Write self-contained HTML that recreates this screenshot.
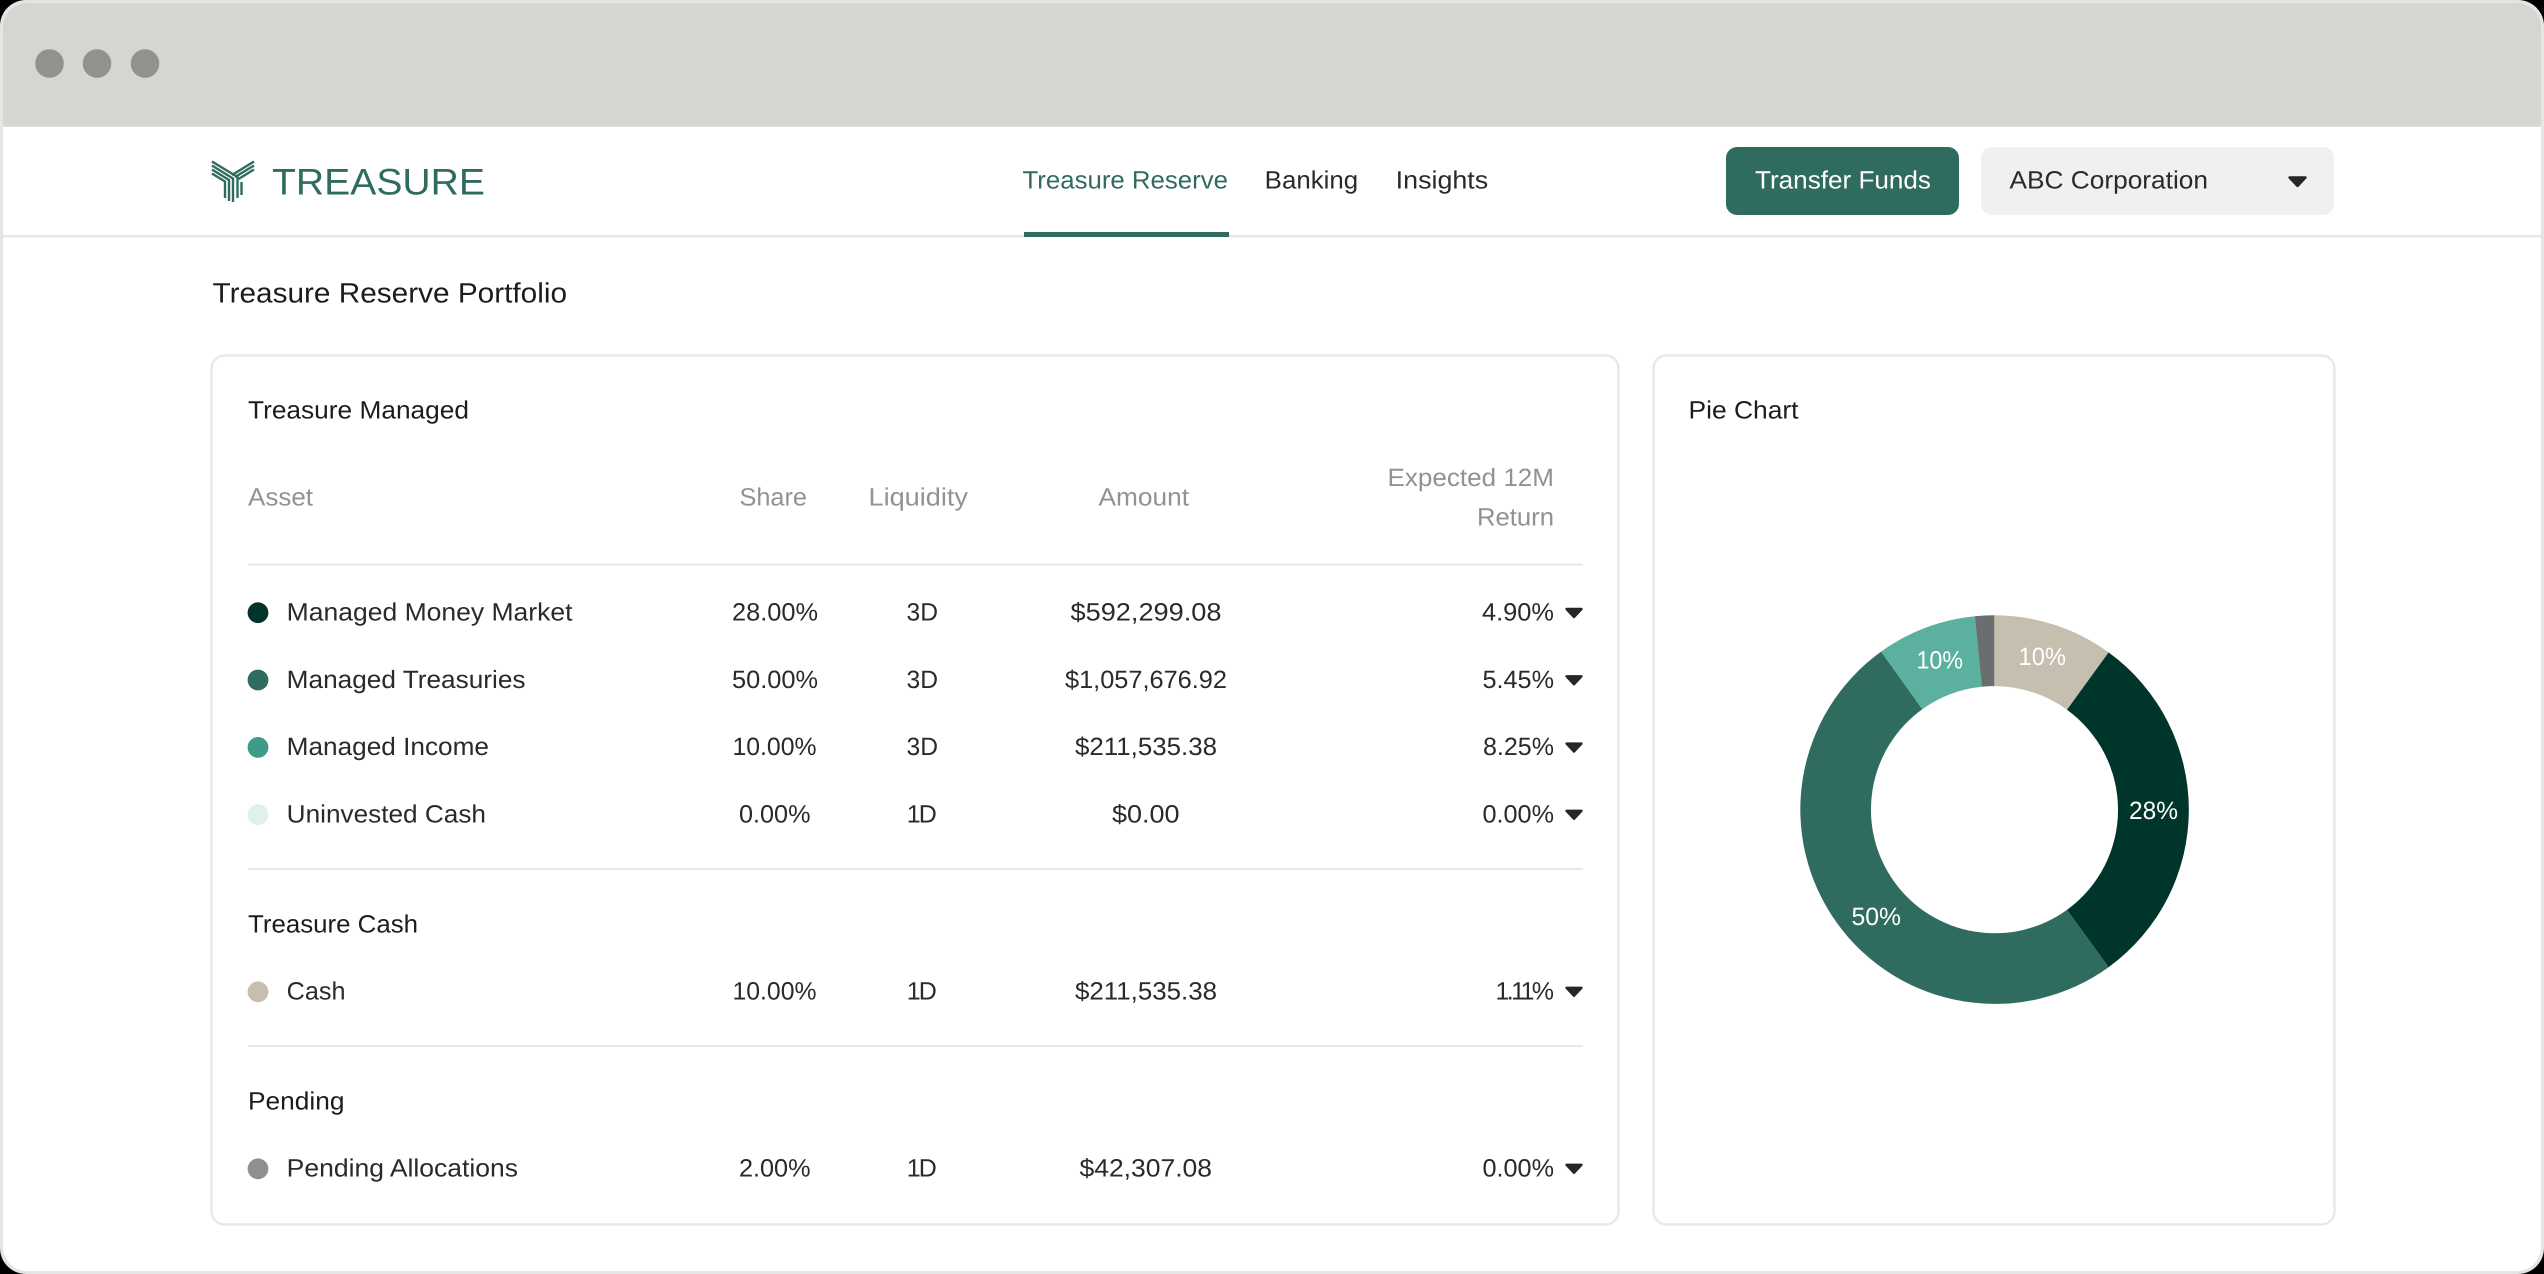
<!DOCTYPE html>
<html lang="en">
<head>
<meta charset="utf-8">
<title>Treasure Reserve Portfolio</title>
<style>
html,body{margin:0;padding:0;width:2544px;height:1274px;overflow:hidden;background:#000}
svg{display:block}
text{font-family:"Liberation Sans",sans-serif;font-size:25px;fill:#2a2a2a;text-rendering:geometricPrecision}
.g{fill:#929292}
.t{fill:#1c1c1c}
.w{fill:#fff}
.n{font-size:25px}
</style>
</head>
<body>
<svg xmlns="http://www.w3.org/2000/svg" width="2544" height="1274" viewBox="0 0 2544 1274">
  <!-- window frame -->
  <rect x="0" y="0" width="2544" height="1274" fill="#000"/>
  <rect x="0" y="0" width="2544" height="1274" rx="26" fill="#e5e5e5"/>
  <path d="M3 127V27A24 24 0 0 1 27 3H2517A24 24 0 0 1 2541 27V127Z" fill="#d6d5d1"/>
  <rect x="3" y="125" width="2538" height="2" fill="#dcdbd8"/>
  <path d="M3 127H2541V1247A24 24 0 0 1 2517 1271H27A24 24 0 0 1 3 1247Z" fill="#fff"/>
  <circle cx="49.5" cy="63.5" r="14.3" fill="#92918e"/>
  <circle cx="97" cy="63.5" r="14.3" fill="#92918e"/>
  <circle cx="145" cy="63.5" r="14.3" fill="#92918e"/>

  <!-- nav -->
  <rect x="3" y="235" width="2538" height="2.4" fill="#e5e5e5"/>
  <rect x="1024" y="232" width="205" height="5" fill="#306b5f"/>

  <!-- logo mark -->
  <g fill="none" stroke="#306b5f" stroke-width="2.4">
    <path d="M212 161.5L237.5 177V198"/>
    <path d="M212 165.5L233 178.5V202"/>
    <path d="M212 169.5L229 180V201"/>
    <path d="M212 173.5L225 181.5V198"/>
    <path d="M254 161.5L232 175"/>
    <path d="M254 165.5L235 177"/>
    <path d="M254 169.5L238.5 179"/>
    <path d="M241.5 182V195"/>
  </g>
  <text x="272" y="194.5" textLength="213" lengthAdjust="spacingAndGlyphs" style="font-size:37px;fill:#306b5f">TREASURE</text>

  <text class="n" x="1022.5" y="188.7" textLength="205.5" lengthAdjust="spacingAndGlyphs" style="fill:#306b5f">Treasure Reserve</text>
  <text class="n" x="1264.7" y="188.7" textLength="93.5" lengthAdjust="spacingAndGlyphs">Banking</text>
  <text class="n" x="1395.7" y="188.7" textLength="92.5" lengthAdjust="spacingAndGlyphs">Insights</text>

  <rect x="1726" y="147" width="233" height="68" rx="11" fill="#306b5f"/>
  <text class="n w" x="1755" y="188.7" textLength="176" lengthAdjust="spacingAndGlyphs">Transfer Funds</text>
  <rect x="1981" y="147" width="353" height="68" rx="11" fill="#f0f0f0"/>
  <text class="n" x="2009.5" y="188.7" textLength="198.5" lengthAdjust="spacingAndGlyphs">ABC Corporation</text>
  <path d="M2289.5 177.5H2305.5L2297.5 186Z" fill="#262626" stroke="#262626" stroke-width="2.4" stroke-linejoin="round"/>

  <!-- title -->
  <text x="212.5" y="302.5" textLength="354.5" lengthAdjust="spacingAndGlyphs" class="t" style="font-size:28px">Treasure Reserve Portfolio</text>

  <!-- cards -->
  <rect x="211.5" y="355.5" width="1407" height="869" rx="13" fill="#fff" stroke="#e8e8e8" stroke-width="2.4"/>
  <rect x="1653.5" y="355.5" width="681" height="869" rx="13" fill="#fff" stroke="#e8e8e8" stroke-width="2.4"/>

  <!-- left card -->
  <text class="t" x="248" y="418.4" textLength="221" lengthAdjust="spacingAndGlyphs">Treasure Managed</text>

  <text class="g" x="248" y="505.5" textLength="65" lengthAdjust="spacingAndGlyphs">Asset</text>
  <text class="g" x="739.5" y="505.5" textLength="67.5" lengthAdjust="spacingAndGlyphs">Share</text>
  <text class="g" x="868.5" y="505.5" textLength="99.5" lengthAdjust="spacingAndGlyphs">Liquidity</text>
  <text class="g" x="1098.5" y="505.5" textLength="90.5" lengthAdjust="spacingAndGlyphs">Amount</text>
  <text class="g" x="1387.5" y="486" textLength="166.5" lengthAdjust="spacingAndGlyphs">Expected 12M</text>
  <text class="g" x="1477" y="525.3" textLength="77" lengthAdjust="spacingAndGlyphs">Return</text>

  <rect x="248" y="563.5" width="1335" height="2" fill="#e8e8e8"/>

  <!-- rows -->
  <circle cx="258" cy="612.7" r="10.4" fill="#03342b"/>
  <text x="286.7" y="620.5" textLength="285.8" lengthAdjust="spacingAndGlyphs">Managed Money Market</text>
  <text x="732" y="620.5" textLength="86" lengthAdjust="spacingAndGlyphs">28.00%</text>
  <text x="906.5" y="620.5" textLength="31.5" lengthAdjust="spacingAndGlyphs">3D</text>
  <text x="1070.5" y="620.5" textLength="151" lengthAdjust="spacingAndGlyphs">$592,299.08</text>
  <text x="1482" y="620.5" textLength="72" lengthAdjust="spacingAndGlyphs">4.90%</text>
  <path d="M1566.5 609H1581.5L1574 617Z" fill="#262626" stroke="#262626" stroke-width="2.4" stroke-linejoin="round"/>

  <circle cx="258" cy="680" r="10.4" fill="#306b5f"/>
  <text x="286.7" y="687.8" textLength="238.8" lengthAdjust="spacingAndGlyphs">Managed Treasuries</text>
  <text x="732" y="687.8" textLength="86" lengthAdjust="spacingAndGlyphs">50.00%</text>
  <text x="906.5" y="687.8" textLength="31.5" lengthAdjust="spacingAndGlyphs">3D</text>
  <text x="1065" y="687.8" textLength="162" lengthAdjust="spacingAndGlyphs">$1,057,676.92</text>
  <text x="1482.5" y="687.8" textLength="71.5" lengthAdjust="spacingAndGlyphs">5.45%</text>
  <path d="M1566.5 676.3H1581.5L1574 684.3Z" fill="#262626" stroke="#262626" stroke-width="2.4" stroke-linejoin="round"/>

  <circle cx="258" cy="747.4" r="10.4" fill="#3e9b87"/>
  <text x="286.7" y="755" textLength="202.3" lengthAdjust="spacingAndGlyphs">Managed Income</text>
  <text x="732.5" y="755" textLength="84" lengthAdjust="spacingAndGlyphs">10.00%</text>
  <text x="906.5" y="755" textLength="31.5" lengthAdjust="spacingAndGlyphs">3D</text>
  <text x="1075" y="755" textLength="142" lengthAdjust="spacingAndGlyphs">$211,535.38</text>
  <text x="1483" y="755" textLength="71" lengthAdjust="spacingAndGlyphs">8.25%</text>
  <path d="M1566.5 743.6H1581.5L1574 751.6Z" fill="#262626" stroke="#262626" stroke-width="2.4" stroke-linejoin="round"/>

  <circle cx="258" cy="814.7" r="10.4" fill="#e0f0ec"/>
  <text x="286.7" y="822.3" textLength="199.3" lengthAdjust="spacingAndGlyphs">Uninvested Cash</text>
  <text x="739" y="822.3" textLength="71.5" lengthAdjust="spacingAndGlyphs">0.00%</text>
  <text x="906.8" y="822.3" textLength="30" lengthAdjust="spacing">1D</text>
  <text x="1112" y="822.3" textLength="67.5" lengthAdjust="spacingAndGlyphs">$0.00</text>
  <text x="1482.5" y="822.3" textLength="71.5" lengthAdjust="spacingAndGlyphs">0.00%</text>
  <path d="M1566.5 810.8H1581.5L1574 818.8Z" fill="#262626" stroke="#262626" stroke-width="2.4" stroke-linejoin="round"/>

  <rect x="248" y="868" width="1335" height="2" fill="#e8e8e8"/>

  <text class="t" x="248" y="932.3" textLength="170" lengthAdjust="spacingAndGlyphs">Treasure Cash</text>

  <circle cx="258" cy="991.8" r="10.4" fill="#c6beae"/>
  <text x="286.7" y="999.5" textLength="58.8" lengthAdjust="spacingAndGlyphs">Cash</text>
  <text x="732.5" y="999.5" textLength="84" lengthAdjust="spacingAndGlyphs">10.00%</text>
  <text x="906.8" y="999.5" textLength="30" lengthAdjust="spacing">1D</text>
  <text x="1075" y="999.5" textLength="142" lengthAdjust="spacingAndGlyphs">$211,535.38</text>
  <text x="1495.5" y="999.5" textLength="58.5" lengthAdjust="spacing">1.11%</text>
  <path d="M1566.5 987.8H1581.5L1574 995.8Z" fill="#262626" stroke="#262626" stroke-width="2.4" stroke-linejoin="round"/>

  <rect x="248" y="1045" width="1335" height="2" fill="#e8e8e8"/>

  <text class="t" x="248" y="1109.3" textLength="96.5" lengthAdjust="spacingAndGlyphs">Pending</text>

  <circle cx="258" cy="1168.8" r="10.4" fill="#8f8f8d"/>
  <text x="286.7" y="1176.5" textLength="231.3" lengthAdjust="spacingAndGlyphs">Pending Allocations</text>
  <text x="739" y="1176.5" textLength="71.5" lengthAdjust="spacingAndGlyphs">2.00%</text>
  <text x="906.8" y="1176.5" textLength="30" lengthAdjust="spacing">1D</text>
  <text x="1079.5" y="1176.5" textLength="132.5" lengthAdjust="spacingAndGlyphs">$42,307.08</text>
  <text x="1482.5" y="1176.5" textLength="71.5" lengthAdjust="spacingAndGlyphs">0.00%</text>
  <path d="M1566.5 1164.8H1581.5L1574 1172.8Z" fill="#262626" stroke="#262626" stroke-width="2.4" stroke-linejoin="round"/>

  <!-- right card -->
  <text class="t" x="1688.5" y="418.4" textLength="110" lengthAdjust="spacingAndGlyphs">Pie Chart</text>

  <!-- donut -->
  <g transform="translate(1994.3 809.8)">
    <path d="M0 -194.5A194.5 194.5 0 0 1 114.3 -157.4L72.7 -100.1A123.7 123.7 0 0 0 0 -123.7Z" fill="#c6beae"/>
    <path d="M114.3 -157.4A194.5 194.5 0 0 1 114.3 157.4L72.7 100.1A123.7 123.7 0 0 0 72.7 -100.1Z" fill="#00352b"/>
    <path d="M114.3 157.4A194.5 194.5 0 1 1 -113.2 -158.2L-72 -100.6A123.7 123.7 0 1 0 72.7 100.1Z" fill="#306b5f"/>
    <path d="M-113.2 -158.2A194.5 194.5 0 0 1 -19.4 -193.5L-12.4 -123.1A123.7 123.7 0 0 0 -72 -100.6Z" fill="#5bb0a0"/>
    <path d="M-19.4 -193.5A194.5 194.5 0 0 1 0 -194.5V-123.7A123.7 123.7 0 0 0 -12.4 -123.1Z" fill="#6b6e6c"/>
  </g>
  <text class="w" x="2018.5" y="665" textLength="47.5" lengthAdjust="spacingAndGlyphs">10%</text>
  <text class="w" x="1916.5" y="668.5" textLength="46.5" lengthAdjust="spacingAndGlyphs">10%</text>
  <text class="w" x="2129" y="819" textLength="49" lengthAdjust="spacingAndGlyphs">28%</text>
  <text class="w" x="1851.5" y="925" textLength="49.5" lengthAdjust="spacingAndGlyphs">50%</text>
</svg>
</body>
</html>
